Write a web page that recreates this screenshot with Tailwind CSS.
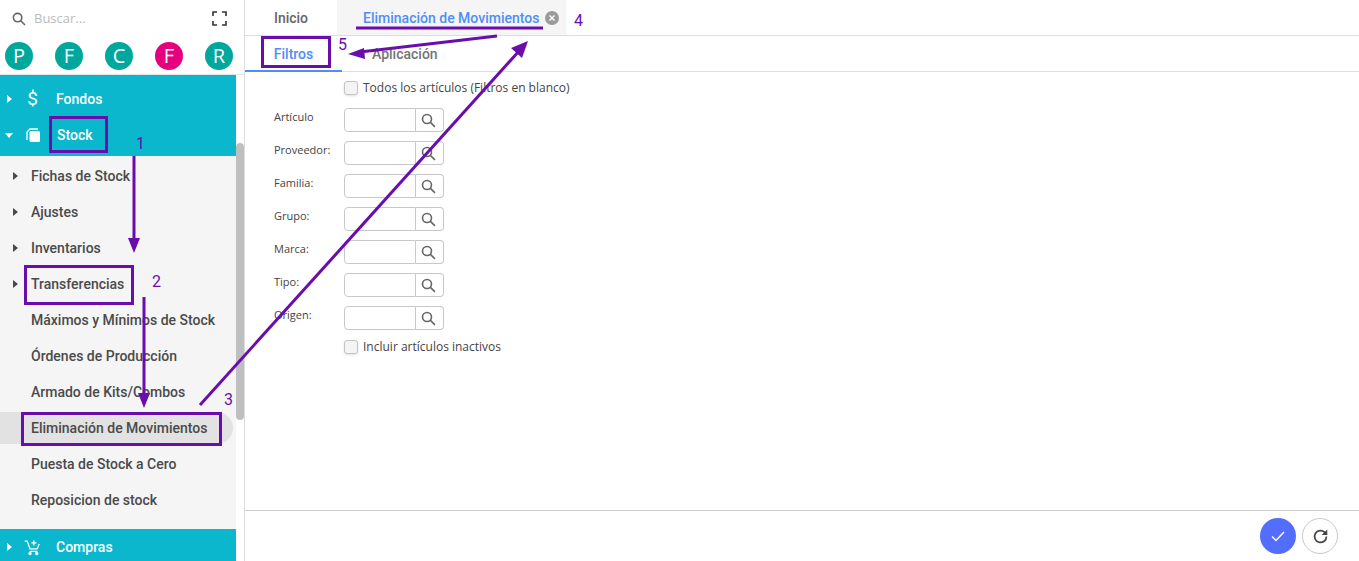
<!DOCTYPE html>
<html lang="en">
<head>
    <meta charset="UTF-8">
    <title>Eliminación de Movimientos</title>
    <script src="https://cdn.jsdelivr.net/npm/@tailwindcss/browser@4"></script>
</head>
<body class="bg-white overflow-hidden font-['Roboto',sans-serif]">
    <div class="relative flex w-[1359px] h-[561px] overflow-hidden">

        <!-- sidebar -->
        <aside class="w-[245px] h-full shrink-0 border-r border-[#ddd] flex flex-col relative">
            <div class="h-[37px] flex items-center pl-[12px] pr-[17px]">
                <svg class="w-[14px] h-[14px] text-[#666]" viewBox="0 0 14 14" fill="none" stroke="currentColor" stroke-width="1.6"><circle cx="5.6" cy="5.6" r="4.2"/><path d="M8.8 8.8l4.2 4.2"/></svg>
                <span class="ml-[8px] text-[13px] text-[#bbb] font-['Open_Sans',sans-serif]">Buscar...</span>
                <svg class="ml-auto w-[15px] h-[15px] text-[#333]" viewBox="0 0 15 15" fill="none" stroke="currentColor" stroke-width="1.6"><path d="M1 5V1h4M10 1h4v4M14 10v4h-4M5 14H1v-4"/></svg>
            </div>
            <div class="h-[38px] flex items-center justify-between pl-[5px] pr-[11px] border-b border-[#e3e3e3] text-white text-[20px] font-['Open_Sans',sans-serif]">
                <span class="w-[28px] h-[28px] rounded-full bg-[#00a79d] flex items-center justify-center">P</span>
                <span class="w-[28px] h-[28px] rounded-full bg-[#00a79d] flex items-center justify-center">F</span>
                <span class="w-[28px] h-[28px] rounded-full bg-[#00a79d] flex items-center justify-center">C</span>
                <span class="w-[28px] h-[28px] rounded-full bg-[#e5007e] flex items-center justify-center">F</span>
                <span class="w-[28px] h-[28px] rounded-full bg-[#00a79d] flex items-center justify-center">R</span>
            </div>

            <nav class="w-[236px] flex-1 flex flex-col text-[14px] font-medium">
                <div class="bg-[#0bb7cc] text-white pt-[6px]">
                    <div class="h-[36px] flex items-center">
                        <svg class="ml-[7px] w-[5px] h-[8px]" viewBox="0 0 5 8" fill="currentColor"><path d="M0 0l5 4-5 4z"/></svg>
                        <span class="w-[21px] ml-[10px] text-center text-[19px] font-normal">$</span>
                        <span class="ml-[13px]">Fondos</span>
                    </div>
                    <div class="h-[39px] pb-[3px] flex items-center">
                        <svg class="ml-[5px] w-[8px] h-[5px]" viewBox="0 0 8 5" fill="currentColor"><path d="M0 0h8L4 5z"/></svg>
                        <svg class="ml-[13px] w-[14px] h-[14px]" viewBox="0 0 14 14"><rect x="3.500" y="3" width="10.500" height="11" rx="1.500" fill="currentColor"/><path d="M1 12V4l3-3h8" fill="none" stroke="currentColor" stroke-width="1.300"/></svg>
                        <span class="ml-[17px]">Stock</span>
                    </div>
                </div>

                <div class="h-[373px] bg-[#f5f5f5] text-[#4a4a4a] pt-[2px]">
                    <div class="h-[36px] flex items-center pl-[13px]">
                        <svg class="w-[5px] h-[8px]" viewBox="0 0 5 8" fill="currentColor"><path d="M0 0l5 4-5 4z"/></svg>
                        <span class="ml-[13px]">Fichas de Stock</span>
                    </div>
                    <div class="h-[36px] flex items-center pl-[13px]">
                        <svg class="w-[5px] h-[8px]" viewBox="0 0 5 8" fill="currentColor"><path d="M0 0l5 4-5 4z"/></svg>
                        <span class="ml-[13px]">Ajustes</span>
                    </div>
                    <div class="h-[36px] flex items-center pl-[13px]">
                        <svg class="w-[5px] h-[8px]" viewBox="0 0 5 8" fill="currentColor"><path d="M0 0l5 4-5 4z"/></svg>
                        <span class="ml-[13px]">Inventarios</span>
                    </div>
                    <div class="h-[36px] flex items-center pl-[13px]">
                        <svg class="w-[5px] h-[8px]" viewBox="0 0 5 8" fill="currentColor"><path d="M0 0l5 4-5 4z"/></svg>
                        <span class="ml-[13px]">Transferencias</span>
                    </div>
                    <div class="h-[36px] flex items-center pl-[31px]">Máximos y Mínimos de Stock</div>
                    <div class="h-[36px] flex items-center pl-[31px]">Órdenes de Producción</div>
                    <div class="h-[36px] flex items-center pl-[31px]">Armado de Kits/Combos</div>
                    <div class="h-[32px] my-[2px] flex items-center pl-[31px] w-[233px] bg-[#e2e2e2] rounded-r-full">Eliminación de Movimientos</div>
                    <div class="h-[36px] flex items-center pl-[31px]">Puesta de Stock a Cero</div>
                    <div class="h-[36px] flex items-center pl-[31px]">Reposicion de stock</div>
                </div>

                <div class="flex-1 bg-[#0bb7cc] text-white flex items-center pt-[4px]">
                    <svg class="ml-[7px] w-[5px] h-[8px]" viewBox="0 0 5 8" fill="currentColor"><path d="M0 0l5 4-5 4z"/></svg>
                    <svg class="ml-[12px] w-[17px] h-[17px]" viewBox="0 0 24 24" fill="none" stroke="currentColor" stroke-width="1.800"><path d="M1 3h3.500l4 11h10l3-7M14 2v7M10.500 5.500h7M8 17.500h11"/><circle cx="8.500" cy="20.500" r="1.500" fill="currentColor"/><circle cx="18" cy="20.500" r="1.500" fill="currentColor"/></svg>
                    <span class="ml-[15px]">Compras</span>
                </div>
            </nav>

            <div class="absolute left-[236px] top-[143px] w-[8px] h-[277px] bg-[#bdbfc1] rounded-full"></div>
        </aside>

        <!-- main -->
        <main class="flex-1 flex flex-col min-w-0">
            <div class="h-[36px] shrink-0 flex border-b border-[#ddd] text-[14px] font-medium">
                <div class="w-[92px] pt-[1px] flex items-center justify-center text-[#666]">Inicio</div>
                <div class="w-[229px] pt-[1px] bg-[#f5f5f5] flex items-center pl-[26px] text-[#4f8ef7]">
                    Eliminación de Movimientos
                    <svg class="ml-[6px] w-[14px] h-[14px]" viewBox="0 0 14 14"><circle cx="7" cy="7" r="7" fill="#9a9a9a"/><path d="M4.500 4.500l5 5M9.500 4.500l-5 5" stroke="#fff" stroke-width="1.500"/></svg>
                </div>
            </div>
            <div class="h-[36px] shrink-0 flex border-b border-[#ddd] text-[14px] font-medium">
                <div class="w-[97px] h-[36px] pt-[2px] flex items-center justify-center text-[#4f8ef7] border-b-2 border-[#4f8ef7]">Filtros</div>
                <div class="ml-[30px] pt-[1px] flex items-center text-[#757575]">Aplicación</div>
            </div>

            <div class="flex-1 pl-[29px] font-['Open_Sans',sans-serif] text-[#444]">
                <label class="ml-[70px] h-[32px] flex items-center text-[12px]">
                    <span class="w-[14px] h-[14px] rounded-[3px] border border-[#c4c4c4] bg-[#f4f4f4] shadow-sm"></span>
                    <span class="ml-[5px]">Todos los artículos (Filtros en blanco)</span>
                </label>
                <div class="flex flex-col gap-[9px] pt-[4px]">
                    <div class="flex h-[24px] text-[11px]">
                        <span class="w-[70px] pt-[1px]">Artículo</span>
                        <span class="w-[72px] border border-[#c8c8c8] rounded-l-[4px]"></span>
                        <span class="w-[28px] pr-[3px] border border-l-0 border-[#c8c8c8] rounded-r-[4px] flex items-center justify-center">
                            <svg class="w-[15px] h-[15px] text-[#666]" viewBox="0 0 14 14" fill="none" stroke="currentColor" stroke-width="1.500"><circle cx="5.600" cy="5.600" r="4.200"/><path d="M8.800 8.800l4.200 4.200"/></svg>
                        </span>
                    </div>
                    <div class="flex h-[24px] text-[11px]">
                        <span class="w-[70px] pt-[1px]">Proveedor:</span>
                        <span class="w-[72px] border border-[#c8c8c8] rounded-l-[4px]"></span>
                        <span class="w-[28px] pr-[3px] border border-l-0 border-[#c8c8c8] rounded-r-[4px] flex items-center justify-center">
                            <svg class="w-[15px] h-[15px] text-[#666]" viewBox="0 0 14 14" fill="none" stroke="currentColor" stroke-width="1.500"><circle cx="5.600" cy="5.600" r="4.200"/><path d="M8.800 8.800l4.200 4.200"/></svg>
                        </span>
                    </div>
                    <div class="flex h-[24px] text-[11px]">
                        <span class="w-[70px] pt-[1px]">Familia:</span>
                        <span class="w-[72px] border border-[#c8c8c8] rounded-l-[4px]"></span>
                        <span class="w-[28px] pr-[3px] border border-l-0 border-[#c8c8c8] rounded-r-[4px] flex items-center justify-center">
                            <svg class="w-[15px] h-[15px] text-[#666]" viewBox="0 0 14 14" fill="none" stroke="currentColor" stroke-width="1.500"><circle cx="5.600" cy="5.600" r="4.200"/><path d="M8.800 8.800l4.200 4.200"/></svg>
                        </span>
                    </div>
                    <div class="flex h-[24px] text-[11px]">
                        <span class="w-[70px] pt-[1px]">Grupo:</span>
                        <span class="w-[72px] border border-[#c8c8c8] rounded-l-[4px]"></span>
                        <span class="w-[28px] pr-[3px] border border-l-0 border-[#c8c8c8] rounded-r-[4px] flex items-center justify-center">
                            <svg class="w-[15px] h-[15px] text-[#666]" viewBox="0 0 14 14" fill="none" stroke="currentColor" stroke-width="1.500"><circle cx="5.600" cy="5.600" r="4.200"/><path d="M8.800 8.800l4.200 4.200"/></svg>
                        </span>
                    </div>
                    <div class="flex h-[24px] text-[11px]">
                        <span class="w-[70px] pt-[1px]">Marca:</span>
                        <span class="w-[72px] border border-[#c8c8c8] rounded-l-[4px]"></span>
                        <span class="w-[28px] pr-[3px] border border-l-0 border-[#c8c8c8] rounded-r-[4px] flex items-center justify-center">
                            <svg class="w-[15px] h-[15px] text-[#666]" viewBox="0 0 14 14" fill="none" stroke="currentColor" stroke-width="1.500"><circle cx="5.600" cy="5.600" r="4.200"/><path d="M8.800 8.800l4.200 4.200"/></svg>
                        </span>
                    </div>
                    <div class="flex h-[24px] text-[11px]">
                        <span class="w-[70px] pt-[1px]">Tipo:</span>
                        <span class="w-[72px] border border-[#c8c8c8] rounded-l-[4px]"></span>
                        <span class="w-[28px] pr-[3px] border border-l-0 border-[#c8c8c8] rounded-r-[4px] flex items-center justify-center">
                            <svg class="w-[15px] h-[15px] text-[#666]" viewBox="0 0 14 14" fill="none" stroke="currentColor" stroke-width="1.500"><circle cx="5.600" cy="5.600" r="4.200"/><path d="M8.800 8.800l4.200 4.200"/></svg>
                        </span>
                    </div>
                    <div class="flex h-[24px] text-[11px]">
                        <span class="w-[70px] pt-[1px]">Origen:</span>
                        <span class="w-[72px] border border-[#c8c8c8] rounded-l-[4px]"></span>
                        <span class="w-[28px] pr-[3px] border border-l-0 border-[#c8c8c8] rounded-r-[4px] flex items-center justify-center">
                            <svg class="w-[15px] h-[15px] text-[#666]" viewBox="0 0 14 14" fill="none" stroke="currentColor" stroke-width="1.500"><circle cx="5.600" cy="5.600" r="4.200"/><path d="M8.800 8.800l4.200 4.200"/></svg>
                        </span>
                    </div>
                </div>
                <label class="ml-[70px] mt-[5px] h-[24px] flex items-center text-[12px]">
                    <span class="w-[14px] h-[14px] rounded-[3px] border border-[#c4c4c4] bg-[#f4f4f4] shadow-sm"></span>
                    <span class="ml-[5px]">Incluir artículos inactivos</span>
                </label>
            </div>

            <div class="h-[51px] shrink-0 border-t border-[#ccc] flex items-center justify-end gap-[6px] pr-[21px]">
                <span class="w-[36px] h-[36px] rounded-full bg-[#536dfe] flex items-center justify-center">
                    <svg class="w-[14px] h-[14px]" viewBox="0 0 14 14" fill="none" stroke="#fff" stroke-width="1.500"><path d="M1 7.500l4 4 8-8.500"/></svg>
                </span>
                <span class="w-[36px] h-[36px] rounded-full border border-[#c8c8c8] flex items-center justify-center">
                    <svg class="w-[19px] h-[19px] text-[#444]" viewBox="0 0 24 24" fill="none" stroke="currentColor" stroke-width="2.200"><path d="M19.500 12a7.500 7.500 0 1 1-2.200-5.300L20 9.500"/><path d="M20.500 3v7h-7" fill="currentColor" stroke="none"/></svg>
                </span>
            </div>
        </main>

        <!-- purple annotations drawn on top of the screenshot -->
        <div class="absolute left-[49px] top-[116px] w-[59px] h-[37px] border-[3px] border-[#6a0dad]"></div>
        <div class="absolute left-[24px] top-[265px] w-[110px] h-[40px] border-[3px] border-[#6a0dad]"></div>
        <div class="absolute left-[21px] top-[412px] w-[201px] h-[34px] border-[3px] border-[#6a0dad]"></div>
        <div class="absolute left-[261px] top-[36px] w-[70px] h-[32px] border-[3px] border-[#6a0dad]"></div>

        <svg class="absolute inset-0 pointer-events-none" width="1359" height="561" fill="none" stroke="#6a0dad" stroke-width="3">
            <path d="M134 156V242"/>
            <path d="M128 238h12l-6 15z" fill="#6a0dad" stroke="none"/>
            <path d="M144 297V396"/>
            <path d="M138 393h12l-6 15z" fill="#6a0dad" stroke="none"/>
            <path d="M200 405L520 50"/>
            <path d="M528 41l-6 17-11-10z" fill="#6a0dad" stroke="none"/>
            <path d="M356 28H543"/>
            <path d="M497 36L360 52"/>
            <path d="M348 54l16-6 1 11z" fill="#6a0dad" stroke="none"/>
        </svg>

        <span class="absolute left-[136px] top-[132px] text-[16px] text-[#6a0dad]">1</span>
        <span class="absolute left-[152px] top-[270px] text-[16px] text-[#6a0dad]">2</span>
        <span class="absolute left-[224px] top-[388px] text-[16px] text-[#6a0dad]">3</span>
        <span class="absolute left-[574px] top-[9px] text-[16px] text-[#6a0dad]">4</span>
        <span class="absolute left-[338px] top-[33px] text-[16px] text-[#6a0dad]">5</span>
    </div>
</body>
</html>
